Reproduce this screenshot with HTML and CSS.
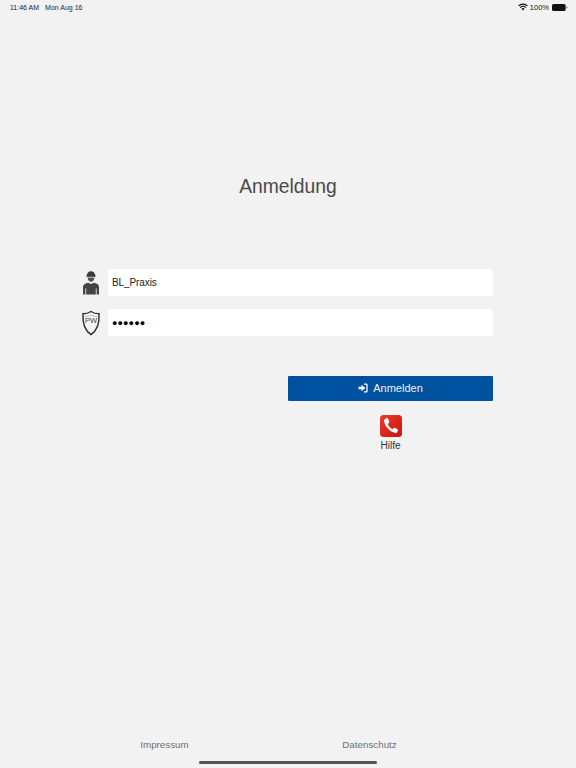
FILE: index.html
```html
<!DOCTYPE html>
<html lang="de">
<head>
<meta charset="utf-8">
<title>Anmeldung</title>
<link rel="stylesheet" href="styles.css">
</head>
<body>
<div class="screen">
  <header class="status">
    <div class="status-left"><span>11:46 AM</span><span>Mon Aug 16</span></div>
    <div class="status-right">
      <svg class="wifi" viewBox="0 0 12 9" width="10" height="8"><path d="M6 8.600 4.200 6.700a2.600 2.600 0 0 1 3.600 0Z" fill="#111"/><path d="M3.200 5.700a4 4 0 0 1 5.600 0l1-1a5.400 5.400 0 0 0-7.600 0Z" fill="#111"/><path d="M1.200 3.700a6.800 6.800 0 0 1 9.600 0l1-1a8.200 8.200 0 0 0-11.600 0Z" fill="#111"/></svg>
      <span>100%</span>
      <svg class="battery" viewBox="0 0 16 7" width="16" height="7"><rect x="0" y="0" width="13.600" height="7" rx="1.600" fill="#111"/><path d="M14.400 2.200c.8.2 1.200.7 1.200 1.300s-.4 1.100-1.200 1.300Z" fill="#777"/></svg>
    </div>
  </header>

  <main class="main">
    <h1 class="title">Anmeldung</h1>
    <form class="form">
      <div class="row">
        <svg class="field-icon" viewBox="0 0 20 26" width="20" height="26">
          <path d="M5.800 6C5.800 3 7.600 1.200 10 1.200S14.200 3 14.200 6Z" fill="#3a3a3a"/>
          <rect x="5.400" y="5.400" width="9.200" height="1.400" fill="#3a3a3a"/>
          <path d="M6.600 7.600h6.800c0 2.600-1.400 4.200-3.400 4.200S6.600 10.200 6.600 7.600Z" fill="#555"/>
          <path d="M2 24.500V17c0-2.400 1.600-3.600 5-4.300l3 1.300 3-1.300c3.400.7 5 1.900 5 4.300v7.500h-2.400v-6h-.8v6H5.200v-6h-.8v6Z" fill="#444"/>
        </svg>
        <div class="input">BL_Praxis</div>
      </div>
      <div class="row">
        <svg class="field-icon" viewBox="0 0 20 26" width="20" height="26">
          <path d="M10 1.500C7.500 3.200 4.500 3.800 2 3.800 1.500 13 3.500 20.500 10 24.500c6.500-4 8.500-11.500 8-20.700-2.500 0-5.500-.6-8-2.300Z" fill="#f4f4f4" stroke="#333" stroke-width="1.500"/>
          <path d="M4.200 6.400c2.200 0 4-.5 5.800-1.500 1.800 1 3.600 1.500 5.800 1.500" fill="none" stroke="#888" stroke-width=".6"/>
          <text class="pw" x="10" y="13" text-anchor="middle">PW</text>
        </svg>
        <div class="input dots">●●●●●●</div>
      </div>
      <div class="actions">
        <button class="login" type="button">
          <svg viewBox="0 0 11 11" width="10" height="10"><path d="M6.500.6h2.400C10 .6 10.600 1.200 10.600 2.300v6.400c0 1.100-.6 1.700-1.700 1.700H6.500V9h2.200c.4 0 .5-.2.500-.5V2.500c0-.3-.1-.5-.5-.5H6.500Z" fill="#fff"/><path d="M3.800 1.800 8.200 5.500 3.800 9.200V7H.6V4h3.200Z" fill="#fff"/></svg>
          <span>Anmelden</span>
        </button>
        <a class="help">
          <svg viewBox="0 0 22 22" width="22" height="22">
            <defs><linearGradient id="red" x1="0" y1="0" x2="1" y2="1"><stop offset="0" stop-color="#ec3a2e"/><stop offset="1" stop-color="#c7160f"/></linearGradient></defs>
            <rect width="22" height="22" rx="3.500" fill="url(#red)"/>
            <path d="M6.400 3.200 4.800 4.200C4 4.700 3.900 5.500 4.100 6.500c1.200 5.400 5.400 9.800 10.600 11.300 1.200.3 1.900.1 2.400-.6l.9-1.600c.3-.5.1-.9-.3-1.200l-2.800-1.600c-.5-.3-.9-.2-1.200.2l-1 1.200c-2.400-1.200-4-3-5-5.300l1.200-1c.4-.4.5-.8.300-1.200L8 3.500c-.4-.6-1-.7-1.600-.3Z" fill="#fff"/>
          </svg>
          <span>Hilfe</span>
        </a>
      </div>
    </form>
  </main>

  <footer class="footer">
    <a>Impressum</a>
    <a>Datenschutz</a>
  </footer>
  <div class="home-bar"></div>
</div>
</body>
</html>
```

FILE: styles.css
```css
* { box-sizing: border-box; }
html, body { margin: 0; height: 100%; }
body {
  background: #f2f2f2;
  font-family: "Liberation Sans", Arial, sans-serif;
  color: #111;
}
.screen {
  position: relative;
  width: 576px;
  height: 768px;
  display: flex;
  flex-direction: column;
  overflow: hidden;
}
.status {
  height: 14px;
  padding: 0 8px 0 10px;
  display: flex;
  justify-content: space-between;
  align-items: center;
  font-size: 7px;
  color: #1a1a1a;
}
.status-left { display: flex; gap: 6px; }
.status-right { display: flex; align-items: center; gap: 2px; font-size: 7.500px; }
.battery { margin-left: 1px; }
.main { flex: 1; display: flex; flex-direction: column; align-items: center; }
.title {
  margin: 161px 0 0;
  height: 24px;
  line-height: 24px;
  font-size: 19.300px;
  font-weight: 400;
  color: #4a4a4a;
  text-align: center;
}
.form {
  width: 412px;
  margin-top: 70px;
  margin-right: 2px;
  display: flex;
  flex-direction: column;
  gap: 13px;
}
.row { display: flex; align-items: center; gap: 7px; height: 27px; }
.field-icon { flex: none; }
.input {
  flex: 1;
  height: 27px;
  background: #fff;
  border-radius: 2px;
  padding: 0 4px;
  display: flex;
  align-items: center;
  font-size: 10px;
  letter-spacing: -.1px;
  color: #222;
}
.dots { font-size: 9px; letter-spacing: .1px; color: #000; }
.pw { font: 400 7.500px "Liberation Sans", sans-serif; fill: #444; }
.actions {
  align-self: flex-end;
  width: 205px;
  margin-top: 27px;
  display: flex;
  flex-direction: column;
  align-items: center;
}
.login {
  width: 100%;
  height: 25px;
  border: 0;
  border-radius: 1px;
  background: #00519f;
  color: #eef3f8;
  font: 400 11px "Liberation Sans", sans-serif;
  display: flex;
  align-items: center;
  justify-content: center;
  gap: 5px;
  padding: 0 0 1px;
}
.help {
  margin-top: 14px;
  display: flex;
  flex-direction: column;
  align-items: center;
  gap: 3px;
  font-size: 10px;
  color: #333;
}
.footer {
  height: 29px;
  padding-left: 62px;
  display: grid;
  grid-template-columns: 205px 205px;
  font-size: 9.800px;
  color: #707070;
}
.footer a { text-align: center; }
.home-bar {
  position: absolute;
  left: 199px;
  bottom: 4px;
  width: 178px;
  height: 3px;
  border-radius: 2px;
  background: #555;
}
```
